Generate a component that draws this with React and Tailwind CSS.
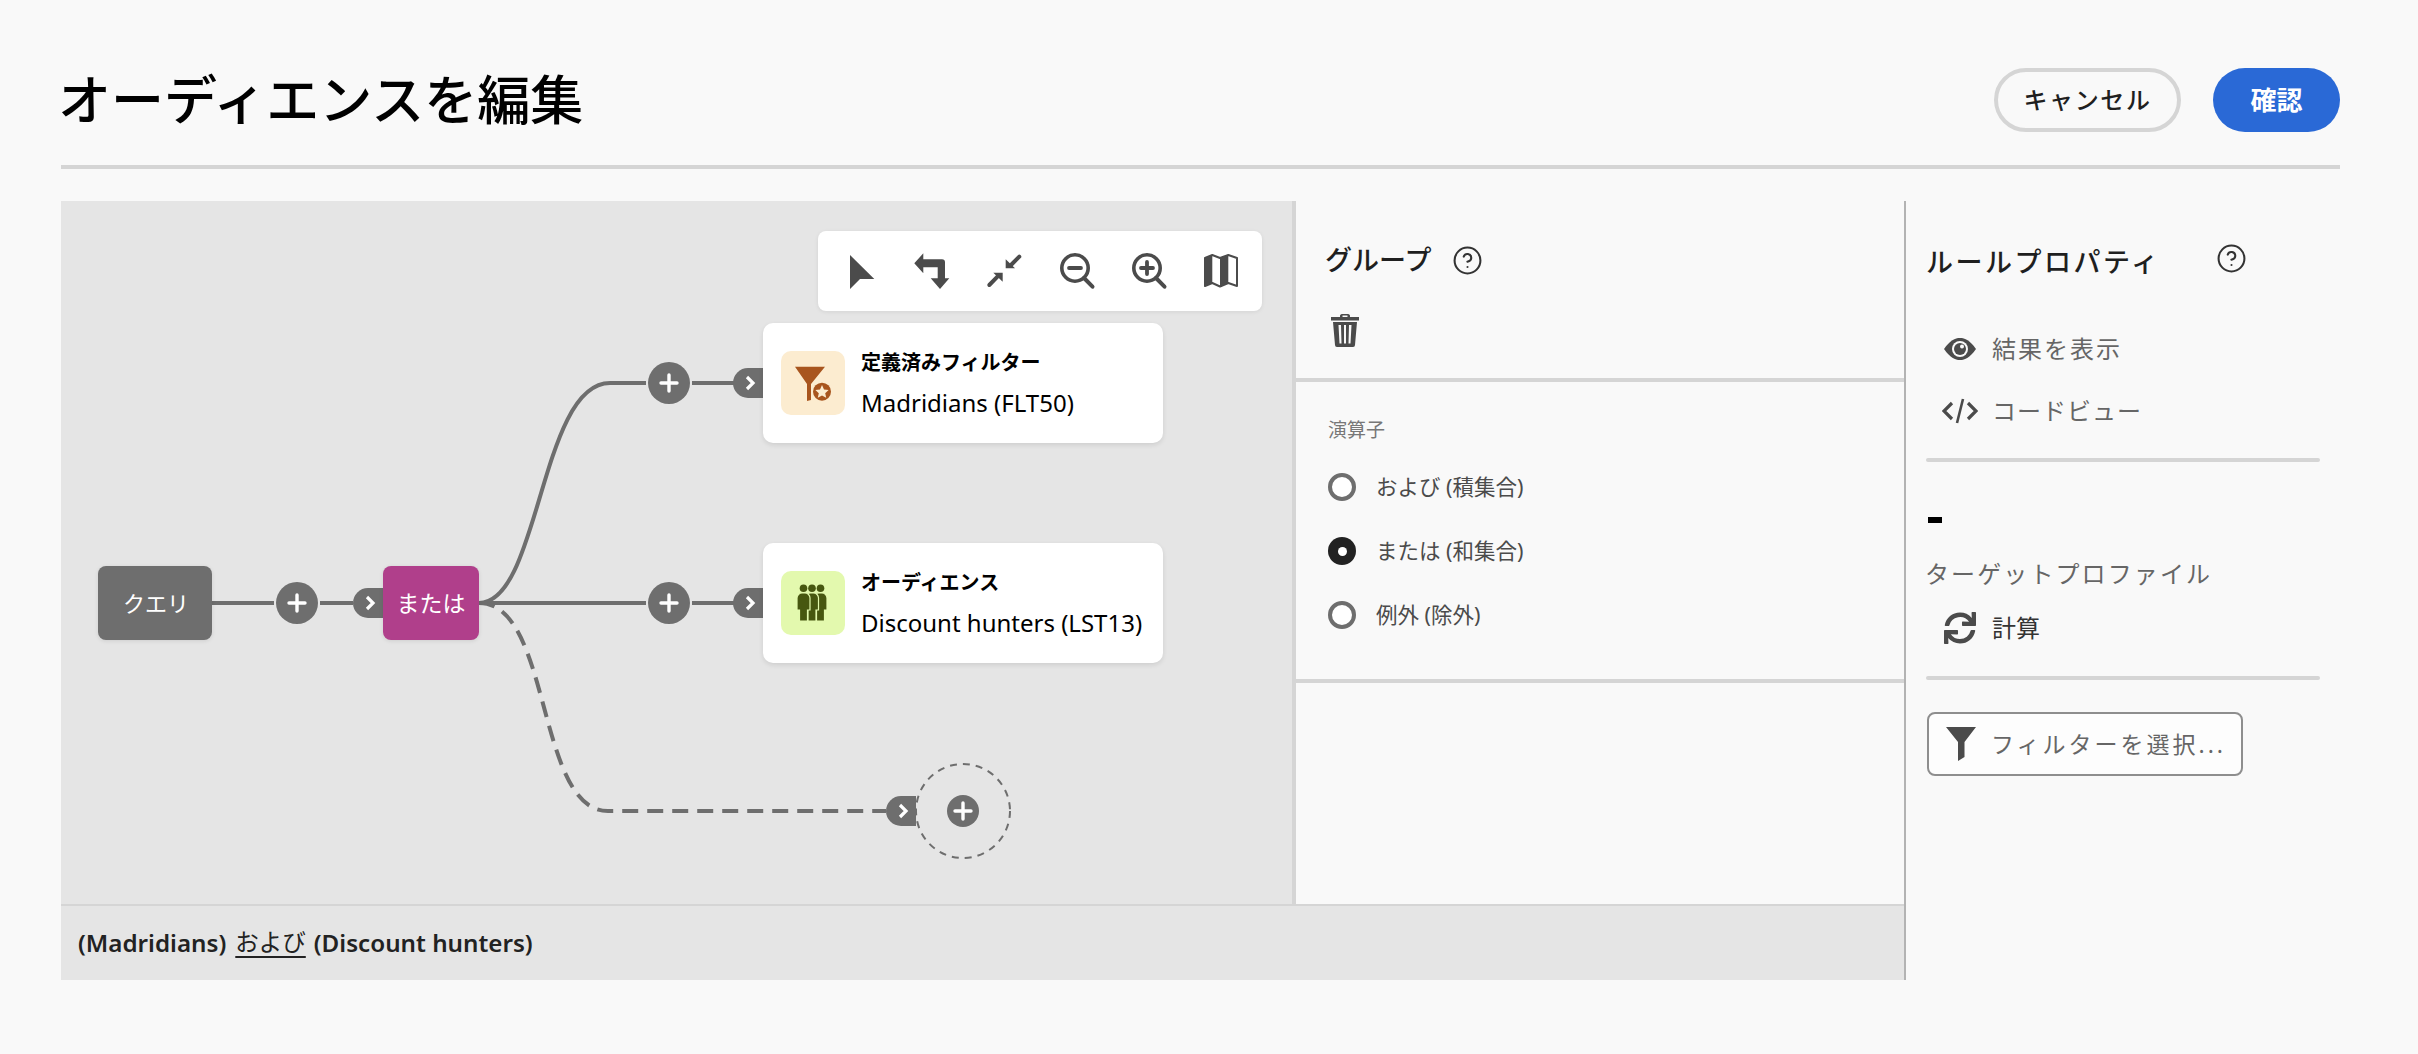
import React from "react";
import { CircleHelp } from "lucide-react";
import { FaSync } from "react-icons/fa";

const cjk = "font-['Noto_Sans','Noto_Sans_CJK_JP',sans-serif]";

function ToolIcon({ children }) {
  return (
    <svg width="36" height="36" viewBox="0 0 36 36" fill="#4b4b4b" className="shrink-0 overflow-visible">
      {children}
    </svg>
  );
}

function Toolbar() {
  return (
    <div className="absolute left-[757px] top-[30px] flex h-[80px] w-[444px] items-center gap-[36px] rounded-[8px] bg-white pl-[24px] shadow-[0_1px_4px_rgba(0,0,0,0.08)]">
      <ToolIcon>
        <path d="M8 2 L32.3 26 H18 L8 36 Z" />
      </ToolIcon>
      <ToolIcon>
        <path d="M0.3 10.3 L9.3 0.3 V6.3 H28 a3 3 0 0 1 3 3 V25.3 H35.3 L26 36 L16.7 25.3 H23.7 V14.3 H9.3 V20.3 Z" />
      </ToolIcon>
      <ToolIcon>
        <path d="M19.7 15.3 V6.3 L29 15.3 Z" />
        <path d="M16.7 19.7 H7.3 L16.7 28.7 Z" />
        <path d="M33.3 3.7 L25 12" stroke="#4b4b4b" strokeWidth="4" strokeLinecap="round" />
        <path d="M3.3 32 L11.5 23.7" stroke="#4b4b4b" strokeWidth="4" strokeLinecap="round" />
      </ToolIcon>
      <ToolIcon>
        <circle cx="17" cy="15" r="13.2" fill="none" stroke="#4b4b4b" strokeWidth="3.6" />
        <path d="M26 25 L34.5 33.7" stroke="#4b4b4b" strokeWidth="4" strokeLinecap="round" />
        <path d="M11 15 H23" stroke="#4b4b4b" strokeWidth="3.8" strokeLinecap="round" />
      </ToolIcon>
      <ToolIcon>
        <circle cx="17" cy="15" r="13.2" fill="none" stroke="#4b4b4b" strokeWidth="3.6" />
        <path d="M26 25 L34.5 33.7" stroke="#4b4b4b" strokeWidth="4" strokeLinecap="round" />
        <path d="M11 15 H23 M17 9 V21" stroke="#4b4b4b" strokeWidth="3.8" strokeLinecap="round" />
      </ToolIcon>
      <ToolIcon>
        <path d="M3 5 L10.3 2 L18 5 L26.3 2 L35 5 V33 L26.3 30 L18 33.5 L10.3 30 L3 33 Z" fill="#fff" stroke="#4b4b4b" strokeWidth="2" strokeLinejoin="round" />
        <path d="M3 5 L10.3 2 V30 L3 33 Z" />
        <path d="M18 5 L26.3 2 V30 L18 33.5 Z" />
      </ToolIcon>
    </div>
  );
}

function FilterTile() {
  return (
    <div className="flex h-[64px] w-[64px] shrink-0 items-center justify-center rounded-[10px] bg-[#fcecd0]">
      <svg width="64" height="64" viewBox="0 0 64 64">
        <path d="M14 15.7 H44 L30 33 V49 L26 50 V33 Z" fill="#a8551e" />
        <circle cx="41" cy="40.7" r="11" fill="#fcecd0" />
        <circle cx="41" cy="40.7" r="9" fill="#a8551e" />
        <path d="M41 34 L43 38.6 L47.6 39.1 L44.2 42.2 L45.2 46.8 L41 44.4 L36.8 46.8 L37.8 42.2 L34.4 39.1 L39 38.6 Z" fill="#fcecd0" />
      </svg>
    </div>
  );
}

function Person({ x }) {
  return (
    <g>
      <path
        d={`M${x} 27 a5 5 0 0 1 5 -5 h3 a5 5 0 0 1 5 5 v12 h-2.5 v11 h-8 v-11 h-2.5 z`}
        fill="#475710"
        stroke="#e3f9ae"
        strokeWidth="1.2"
      />
      <circle cx={x + 6.5} cy="17.3" r="3.8" fill="#475710" />
    </g>
  );
}

function AudienceTile() {
  return (
    <div className="flex h-[64px] w-[64px] shrink-0 items-center justify-center rounded-[10px] bg-[#e3f9ae]">
      <svg width="64" height="64" viewBox="0 0 64 64">
        <Person x={33} />
        <Person x={24.5} />
        <Person x={16} />
      </svg>
    </div>
  );
}

function Card({ className, tile, title, name }) {
  return (
    <div className={`absolute left-[702px] flex h-[120px] w-[400px] items-center gap-[16px] rounded-[10px] bg-white pl-[18px] shadow-[0_2px_5px_rgba(0,0,0,0.1)] ${className}`}>
      {tile}
      <div className="flex flex-col whitespace-nowrap text-black">
        <span className="text-[20px] leading-[28px] font-bold">{title}</span>
        <span className="mt-[11px] text-[24px] leading-[30px]">{name}</span>
      </div>
    </div>
  );
}

function Plus({ x, y, r = 21 }) {
  return (
    <g>
      <circle cx={x} cy={y} r={r} fill="#6e6e6e" />
      <path d={`M${x - 8} ${y} H${x + 8} M${x} ${y - 8} V${y + 8}`} stroke="#fff" strokeWidth="3.4" strokeLinecap="round" />
    </g>
  );
}

function Pill({ x, y }) {
  return (
    <g>
      <path d={`M${x} ${y - 15} H${x - 15} a15 15 0 0 0 0 30 H${x} Z`} fill="#6e6e6e" />
      <path d={`M${x - 16} ${y - 6} L${x - 10} ${y} L${x - 16} ${y + 6}`} fill="none" stroke="#fff" strokeWidth="3.2" />
    </g>
  );
}

function Wires() {
  return (
    <svg className="absolute left-0 top-0" width="1231" height="702" viewBox="61 201 1231 702" fill="none">
      <g stroke="#6e6e6e" strokeWidth="4">
        <path d="M212 603 H274 M320 603 H353" />
        <path d="M479 603 C 540 603, 540 383, 610 383 H646" />
        <path d="M692 383 H737" />
        <path d="M479 603 H646 M692 603 H737" />
        <path d="M479 603 C 552 603, 536 811, 608 811 H886" strokeDasharray="16 9" />
      </g>
      <Plus x={297} y={603} />
      <Plus x={669} y={383} />
      <Plus x={669} y={603} />
      <Pill x={383} y={603} />
      <Pill x={763} y={383} />
      <Pill x={763} y={603} />
      <Pill x={916} y={811} />
      <circle cx="963" cy="811" r="47" fill="none" stroke="#6e6e6e" strokeWidth="2" strokeDasharray="7 6" />
      <Plus x={963} y={811} r={16} />
    </svg>
  );
}

function Canvas() {
  return (
    <div className="relative h-full w-[1231px] shrink-0 bg-[#e5e5e5]">
      <Wires />
      <div className="absolute left-[37px] top-[365px] flex h-[74px] w-[114px] items-center justify-center rounded-[8px] bg-[#6e6e6e] pl-[2px] text-[22px] text-white shadow-[0_1px_4px_rgba(0,0,0,0.1)]">
        クエリ
      </div>
      <div className="absolute left-[322px] top-[365px] flex h-[74px] w-[96px] items-center justify-center rounded-[8px] bg-[#b03f8b] text-[23px] text-white shadow-[0_1px_4px_rgba(0,0,0,0.1)]">
        または
      </div>
      <Toolbar />
      <Card className="top-[122px]" tile={<FilterTile />} title="定義済みフィルター" name="Madridians (FLT50)" />
      <Card className="top-[342px]" tile={<AudienceTile />} title="オーディエンス" name="Discount hunters (LST13)" />
    </div>
  );
}

function Radio({ checked, label }) {
  return (
    <div className="flex h-[28px] items-center gap-[20px]">
      {checked ? (
        <span className="flex h-[28px] w-[28px] items-center justify-center rounded-full bg-[#222222]">
          <span className="h-[9px] w-[9px] rounded-full bg-white" />
        </span>
      ) : (
        <span className="h-[28px] w-[28px] rounded-full border-[4px] border-[#6e6e6e] bg-white" />
      )}
      <span className="text-[21.5px] text-[#4b4b4b]">{label}</span>
    </div>
  );
}

function MiddlePanel() {
  return (
    <div className="flex h-full min-w-0 flex-1 flex-col border-l-[4px] border-[#d5d5d5]">
      <div className="h-[181px] shrink-0 border-b-[4px] border-[#d5d5d5] pl-[29px]">
        <div className="flex items-center gap-[21px] pt-[41px] text-[#1f1f1f]">
          <span className="text-[27px] leading-[36px] font-medium">グループ</span>
          <CircleHelp size={31} strokeWidth={1.6} color="#333333" />
        </div>
        <svg width="32" height="34" viewBox="0 0 32 34" className="ml-[4px] mt-[35px]" fill="#4b4b4b">
          <path d="M11 2.5 a2 2 0 0 1 2 -1.5 h6 a2 2 0 0 1 2 1.5 v1.5 h9 v3.5 h-28 v-3.5 h9 z M13.5 2.5 v1.5 h5 v-1.5 z" fillRule="evenodd" />
          <path d="M4 9 H28 L26 32 a2 2 0 0 1 -2 2 H8 a2 2 0 0 1 -2 -2 Z M9.5 12 L10.5 30.5 H12.5 L12 12 Z M15 12 V30.5 H17 V12 Z M20 12 L19.5 30.5 H21.5 L22.5 12 Z" fillRule="evenodd" />
        </svg>
      </div>
      <div className="h-[301px] shrink-0 border-b-[4px] border-[#d5d5d5] pl-[32px]">
        <div className="pt-[33px] text-[19px] leading-[30px] text-[#777777]">演算子</div>
        <div className="mt-[28px] flex flex-col gap-[36px]">
          <Radio label="および (積集合)" />
          <Radio checked label="または (和集合)" />
          <Radio label="例外 (除外)" />
        </div>
      </div>
    </div>
  );
}

function Action({ icon, label, className = "" }) {
  return (
    <div className="flex items-center pl-[16px]">
      <span className="flex w-[36px] justify-center">{icon}</span>
      <span className={`ml-[14px] whitespace-nowrap text-[24px] text-[#666666] ${className}`}>{label}</span>
    </div>
  );
}

function RightPanel() {
  return (
    <div className="flex h-full w-[414px] shrink-0 flex-col pl-[20px]">
      <div className="flex items-center pt-[40px]">
        <span className="w-[291px] whitespace-nowrap text-[27px] leading-[42px] font-medium tracking-[2.5px] text-[#1f1f1f]">ルールプロパティ</span>
        <CircleHelp size={31} strokeWidth={1.6} color="#333333" className="-mt-[8px] -ml-[1px]" />
      </div>
      <div className="mt-[48px] flex flex-col gap-[26px]">
        <Action
          label="結果を表示"
          className="tracking-[2px]"
          icon={
            <svg width="32" height="22" viewBox="0 0 32 22">
              <path d="M0 11 C6 2.5 11 0 16 0 C21 0 26 2.5 32 11 C26 19.5 21 22 16 22 C11 22 6 19.5 0 11 Z" fill="#4b4b4b" />
              <circle cx="16" cy="11" r="8" fill="#f9f9f9" />
              <circle cx="16" cy="11" r="6" fill="#4b4b4b" />
              <circle cx="18" cy="8.5" r="2" fill="#f9f9f9" />
            </svg>
          }
        />
        <Action
          label="コードビュー"
          className="tracking-[1px]"
          icon={
            <svg width="36" height="26" viewBox="0 0 36 26" fill="none" stroke="#4b4b4b" strokeWidth="3.2">
              <path d="M10 5 L2 13 L10 21" />
              <path d="M26 5 L34 13 L26 21" />
              <path d="M21 1 L15 25" strokeWidth="2.6" />
            </svg>
          }
        />
      </div>
      <div className="mt-[29px] h-[4px] w-[394px] shrink-0 rounded-full bg-[#d5d5d5]" />
      <div className="ml-[2px] mt-[55px] h-[6px] w-[14px] bg-black" />
      <div className="-ml-[1px] mt-[33px] whitespace-nowrap text-[24px] leading-[36px] tracking-[2.1px] text-[#666666]">ターゲットプロファイル</div>
      <div className="mt-[18px]">
        <Action label="計算" className="!text-[#333333]" icon={<FaSync size={32} color="#4b4b4b" />} />
      </div>
      <div className="mt-[30px] h-[4px] w-[394px] shrink-0 rounded-full bg-[#d5d5d5]" />
      <div className="ml-[1px] mt-[32px] flex h-[64px] w-[316px] items-center rounded-[8px] border-[2px] border-[#8e8e8e] bg-[#fdfdfd] pl-[16px]">
        <svg width="32" height="34" viewBox="0 0 32 34" fill="#4b4b4b">
          <path d="M1 0 H31 L19.5 15 V30 L13 34 V15 Z" />
        </svg>
        <span className="ml-[14px] whitespace-nowrap text-[23px] tracking-[3px] text-[#666666]">フィルターを選択...</span>
      </div>
    </div>
  );
}

export default function App() {
  return (
    <div className={`h-[1054px] w-[2418px] overflow-hidden bg-[#f9f9f9] ${cjk}`}>
      <header className="mx-[61px] flex h-[169px] w-[2279px] items-center justify-between border-b-[4px] border-[#d5d5d5] pt-[35px]">
        <h1 className="-ml-[3px] text-[53px] leading-[60px] font-medium text-black">オーディエンスを編集</h1>
        <div className="flex items-center gap-[32px]">
          <button className="h-[64px] w-[187px] rounded-full border-[4px] border-[#d5d5d5] text-[24px] font-medium tracking-[1.6px] text-[#1f1f1f]">キャンセル</button>
          <button className="h-[64px] w-[127px] rounded-full bg-[#2a69d6] text-[26px] font-bold text-white">確認</button>
        </div>
      </header>
      <main className="ml-[61px] mt-[32px] flex h-[779px]">
        <div className="flex h-full w-[1845px] shrink-0 flex-col border-r-[2px] border-[#b3b3b3]">
          <div className="flex h-[703px] shrink-0">
            <Canvas />
            <MiddlePanel />
          </div>
          <div className="flex h-[76px] items-center border-t-[2px] border-[#d5d5d5] bg-[#e5e5e5] pl-[17px] text-[24.2px] whitespace-nowrap text-[#222222]">
            <span className="font-semibold">(Madridians)</span>
            <span className="ml-[9px] text-[23.5px] underline underline-offset-[5px]">および</span>
            <span className="ml-[8px] font-semibold">(Discount hunters)</span>
          </div>
        </div>
        <RightPanel />
      </main>
    </div>
  );
}
